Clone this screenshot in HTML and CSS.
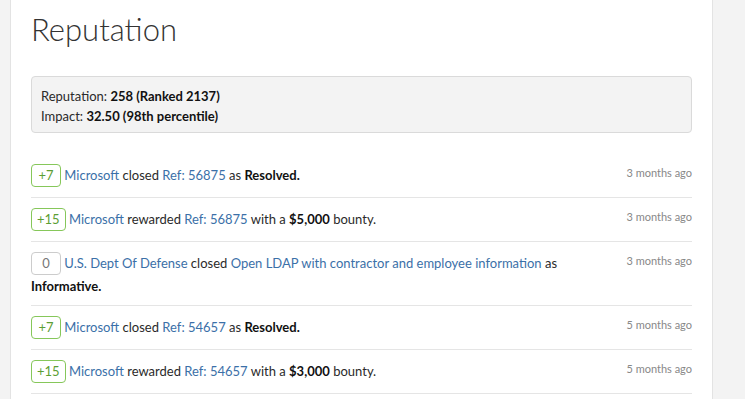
FILE: index.html
```html
<!DOCTYPE html>
<html lang="en">
<head>
    <meta charset="UTF-8">
    <title>Reputation</title>
    <link rel="stylesheet" href="styles.css">
</head>
<body>
    <div class="panel">
        <h1 class="page_title">Reputation</h1>

        <div class="rep_summary">
            <div>Reputation: <b>258 (Ranked 2137)</b></div>
            <div>Impact: <b>32.50 (98th percentile)</b></div>
        </div>

        <ul class="rep_list">
            <li class="rep_item">
                <div class="rep_text"><span class="badge plus">+7</span> <a href="#">Microsoft</a> closed <a href="#">Ref: 56875</a> as <b>Resolved.</b></div>
                <div class="rep_time">3 months ago</div>
            </li>
            <li class="rep_item">
                <div class="rep_text"><span class="badge plus">+15</span> <a href="#">Microsoft</a> rewarded <a href="#">Ref: 56875</a> with a <b>$5,000</b> bounty.</div>
                <div class="rep_time">3 months ago</div>
            </li>
            <li class="rep_item">
                <div class="rep_text"><span class="badge zero">0</span> <a href="#">U.S. Dept Of Defense</a> closed <a href="#">Open LDAP with contractor and employee information</a> as <b>Informative.</b></div>
                <div class="rep_time">3 months ago</div>
            </li>
            <li class="rep_item">
                <div class="rep_text"><span class="badge plus">+7</span> <a href="#">Microsoft</a> closed <a href="#">Ref: 54657</a> as <b>Resolved.</b></div>
                <div class="rep_time">5 months ago</div>
            </li>
            <li class="rep_item">
                <div class="rep_text"><span class="badge plus">+15</span> <a href="#">Microsoft</a> rewarded <a href="#">Ref: 54657</a> with a <b>$3,000</b> bounty.</div>
                <div class="rep_time">5 months ago</div>
            </li>
        </ul>
    </div>
</body>
</html>
```

FILE: styles.css
```css
body{
    margin:0;
    background:#f3f3f3;
    font-family:"Lato", "Open Sans", sans-serif;
    font-size:13px;
    color:#2a2a2a;
}
.panel{
    width:661px;
    min-height:420px;
    margin-left:10px;
    padding:0 20px;
    background:#fff;
    border-left:1px solid #e3e3e3;
    border-right:1px solid #e3e3e3;
}
.page_title{
    margin:0;
    padding-top:9px;
    font-family:"Lato", sans-serif;
    font-weight:300;
    font-size:31px;
    line-height:40px;
    color:#333;
}
.rep_summary{
    margin-top:27px;
    padding:9px 9px 6px;
    background:#f3f3f3;
    border:1px solid #dadada;
    border-radius:4px;
    line-height:20px;
}
.rep_list{
    list-style:none;
    margin:21px 0 0;
    padding:0;
}
.rep_item{
    display:flex;
    align-items:flex-start;
    padding:10px 0 7px;
    border-bottom:1px solid #e5e5e5;
    line-height:23px;
}
.rep_text{
    flex:1;
    padding-right:36px;
}
.rep_time{
    font-size:11px;
    color:#888;
    line-height:16px;
    padding:1px 0 9px;
}
a{
    color:#3b70a8;
    text-decoration:none;
}
b{
    color:#111;
}
.badge{
    display:inline-block;
    min-width:18px;
    padding:0 5px;
    text-align:center;
    line-height:21px;
    border:1px solid #ccc;
    border-radius:4px;
}
.badge.plus{
    border-color:#86c75a;
    color:#5c9e34;
}
.badge.zero{
    color:#777;
}
```
